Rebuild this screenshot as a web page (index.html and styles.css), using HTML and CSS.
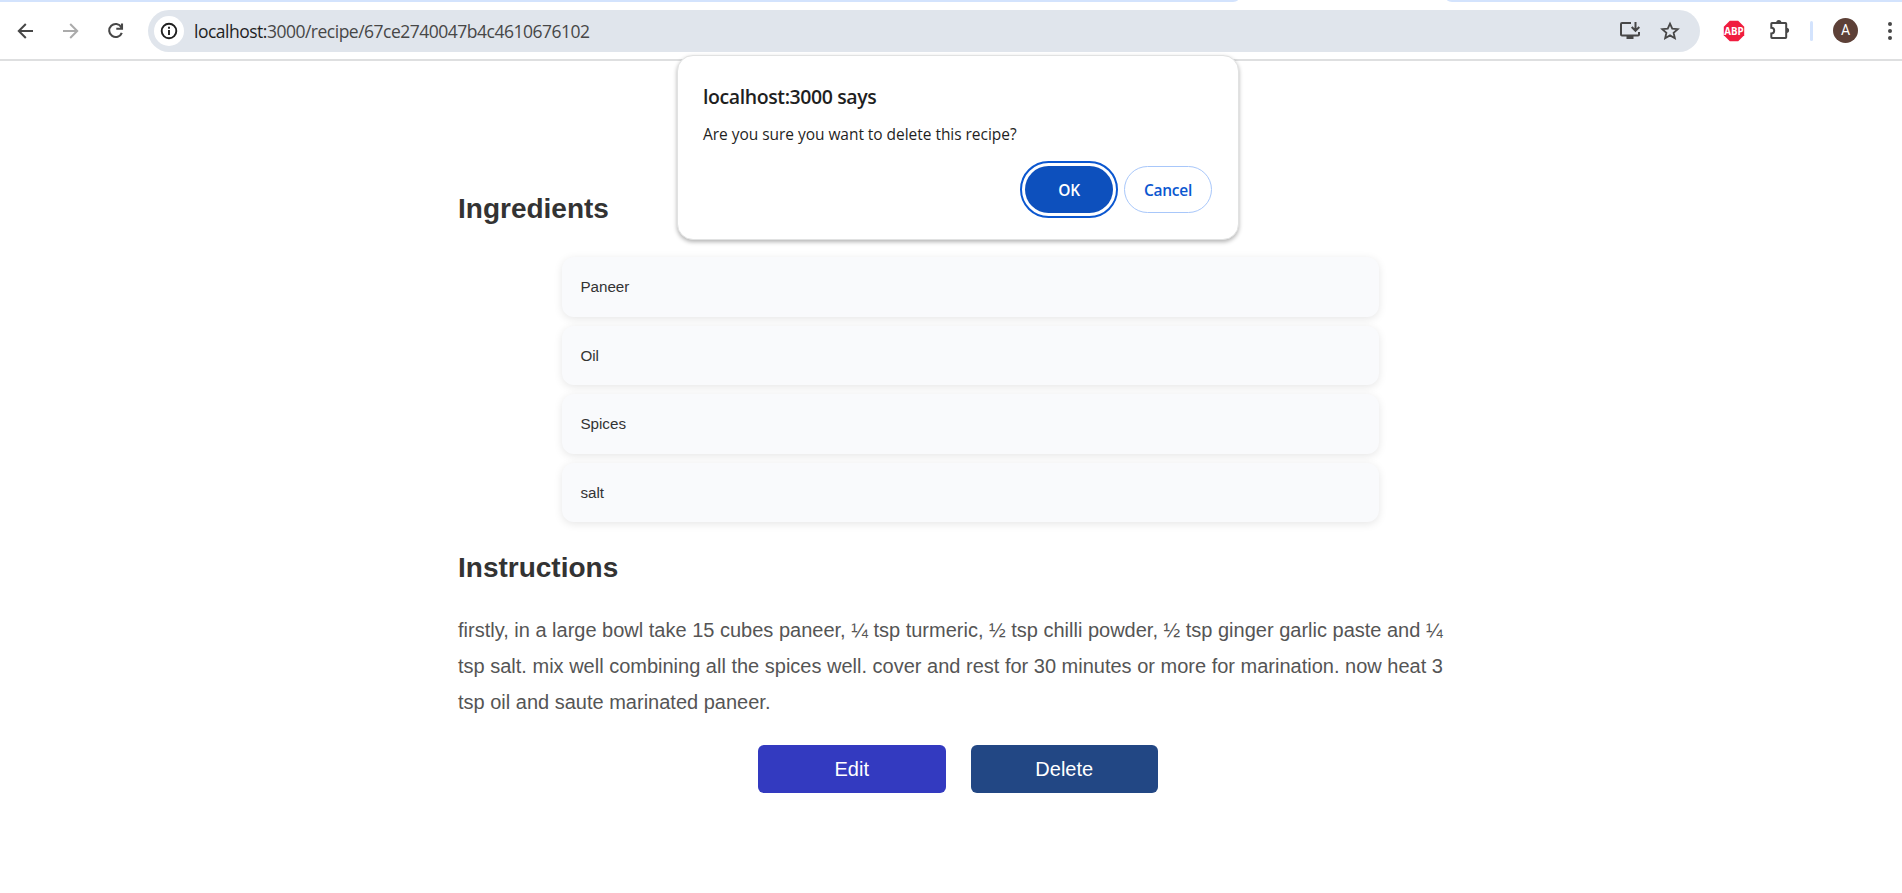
FILE: index.html
```html
<!DOCTYPE html>
<html lang="en">
<head>
<meta charset="utf-8">
<title>Recipe</title>
<link rel="stylesheet" href="styles.css">
</head>
<body>
<div class="tabstrip"><div class="tabstrip-left"></div><div class="tabstrip-right"></div></div>
<header class="toolbar">
  <nav class="nav">
    <svg class="icon" width="24" height="24" viewBox="0 0 24 24" fill="none" stroke="#474747" stroke-width="2"><path d="M20 12H6M12.800 5L5.800 12l7 7"/></svg>
    <svg class="icon" width="24" height="24" viewBox="0 0 24 24" fill="none" stroke="#ababab" stroke-width="2"><path d="M5 12h14M12.200 5l7 7-7 7"/></svg>
    <svg class="icon" width="24" height="24" viewBox="0 0 24 24" fill="none" stroke="#474747" stroke-width="2.100"><path d="M18.300 8.200A6.500 6.500 0 1 0 18.800 13.800M19 4.500v5.200h-5.700"/></svg>
  </nav>
  <div class="omnibox">
    <span class="site-info"><svg width="18" height="18" viewBox="0 0 18 18" fill="none" stroke="#1f1f1f" stroke-width="1.900"><circle cx="9" cy="9" r="7.300"/><path d="M9 8v5M9 4.800v1.900"/></svg></span>
    <span class="url"><span class="host">localhost:</span>3000/recipe/67ce2740047b4c4610676102</span>
    <svg class="install" width="22" height="20" viewBox="0 0 22 20" fill="none" stroke="#474747" stroke-width="2"><path d="M12 2H3Q2 2 2 3v10.500q0 1 1 1h16q1 0 1-1V11M16.500 1v8M12.700 6l3.800 3.800L20.300 6"/><path d="M7.500 15h7v3h-7z" fill="#474747" stroke="none"/></svg>
    <svg class="star" width="20" height="20" viewBox="0 0 20 20" fill="none" stroke="#474747" stroke-width="1.800"><path d="M10 2.600l2.250 5.050 5.500.5-4.150 3.650 1.250 5.400L10 14.350 5.150 17.200l1.250-5.400L2.250 8.150l5.500-.5z"/></svg>
  </div>
  <div class="actions">
    <svg class="abp" width="22" height="22" viewBox="0 0 22 22"><path d="M6.800.8h8.400l6 6v8.400l-6 6H6.800l-6-6V6.800z" fill="#f01c3f"/><text x="1.300" y="15" textLength="19.400" lengthAdjust="spacingAndGlyphs" class="abp-text">ABP</text></svg>
    <svg class="puzzle" width="24" height="24" viewBox="0 0 24 24" fill="none" stroke="#474747" stroke-width="2"><path d="M4 6h13.500q.7 0 .7.700v13.500q0 .7-.7.700H4q-.7 0-.7-.7V16.500a2.900 2.900 0 0 0 0-5.800V6.700Q3.300 6 4 6z"/><path d="M8.200 5.500a2.600 2.600 0 0 1 5.200 0zM18.500 10.700a2.600 2.600 0 0 1 0 5.200z" fill="#474747" stroke="none"/></svg>
    <span class="divider"></span>
    <span class="avatar">A</span>
    <svg class="menu" width="6" height="20" viewBox="0 0 6 20" fill="#474747"><circle cx="3" cy="3" r="2"/><circle cx="3" cy="10" r="2"/><circle cx="3" cy="17" r="2"/></svg>
  </div>
</header>
<main class="recipe">
  <h2 class="heading">Ingredients</h2>
  <ul class="ingredients">
    <li class="ingredient">Paneer</li>
    <li class="ingredient">Oil</li>
    <li class="ingredient">Spices</li>
    <li class="ingredient">salt</li>
  </ul>
  <h2 class="heading">Instructions</h2>
  <p class="instructions">firstly, in a large bowl take 15 cubes paneer, ¼ tsp turmeric, ½ tsp chilli powder, ½ tsp ginger garlic paste and ¼<br>tsp salt. mix well combining all the spices well. cover and rest for 30 minutes or more for marination. now heat 3<br>tsp oil and saute marinated paneer.</p>
  <div class="buttons">
    <button class="button edit">Edit</button>
    <button class="button delete">Delete</button>
  </div>
</main>
<div class="dialog" role="dialog">
  <div class="dialog-title"><span>localhost:3000 says</span></div>
  <div class="dialog-message"><span>Are you sure you want to delete this recipe?</span></div>
  <div class="dialog-actions">
    <button class="dialog-button ok">OK</button>
    <button class="dialog-button cancel">Cancel</button>
  </div>
</div>
</body>
</html>
```
FILE: styles.css
```css
* { box-sizing: border-box; }
body {
  margin: 0;
  height: 893px;
  overflow: hidden;
  background: #fff;
  font-family: "Liberation Sans", Arial, sans-serif;
}
svg { display: block; flex: none; }
.tabstrip { display: flex; justify-content: space-between; height: 2px; }
.tabstrip-left { width: 1238px; background: #d3e3fd; border-bottom-right-radius: 8px 2px; }
.tabstrip-right { width: 455px; background: #d3e3fd; border-bottom-left-radius: 8px 2px; }
.toolbar {
  display: flex;
  align-items: center;
  height: 59px;
  border-bottom: 2px solid #dedfe0;
}
.nav { display: flex; gap: 21px; width: 148px; padding-left: 13px; }
.omnibox {
  display: flex;
  align-items: center;
  width: 1552px;
  height: 42px;
  padding-left: 6px;
  border-radius: 21px;
  background: #e0e5ec;
}
.site-info {
  display: flex;
  align-items: center;
  justify-content: center;
  width: 30px;
  height: 30px;
  border-radius: 50%;
  background: #fff;
}
.url {
  flex: 1;
  padding-left: 10px;
  font: 17.5px/24px "Open Sans", sans-serif;
  letter-spacing: -0.5px;
  color: #474747;
  white-space: nowrap;
}
.host { color: #1f1f1f; }
.install { margin-right: 19px; }
.star { margin-right: 20px; }
.actions { display: flex; align-items: center; padding-left: 23px; }
.abp-text { font: bold 10.5px "Open Sans", sans-serif; fill: #fff; }
.puzzle { margin: -3px 17px 0 23px; }
.divider { width: 3px; height: 20px; margin-left: 1px; border-radius: 1.5px; background: #d3e3fd; }
.avatar {
  width: 25px;
  height: 25px;
  margin: 0 29px 0 20px;
  border-radius: 50%;
  background: #5d4037;
  color: #fff;
  font: 14px/25px Roboto, sans-serif;
  text-align: center;
}
.recipe { width: 1000px; margin-left: 458px; padding-top: 132px; }
.heading { margin: 0; font-size: 28px; line-height: 32px; color: #333; }
.ingredients {
  display: flex;
  flex-direction: column;
  gap: 8.8px;
  width: 817px;
  margin: 32.4px 0 30px 104px;
  padding: 0;
  list-style: none;
}
.ingredient {
  height: 59.6px;
  padding-left: 18.400px;
  border-radius: 12px;
  background: #f9fafc;
  box-shadow: 0 2px 8px rgba(0, 0, 0, .1);
  color: #333;
  font-size: 15.2px;
  line-height: 60.4px;
}
.instructions { margin: 28px 0 0; font-size: 20px; line-height: 36px; color: #555; white-space: nowrap; }
.buttons { display: flex; justify-content: center; gap: 25px; margin-top: 25px; }
.button {
  width: 187.5px;
  height: 48px;
  padding: 0;
  border: 0;
  border-radius: 6px;
  color: #fff;
  font: 20px/48px "Liberation Sans", Arial, sans-serif;
}
.edit { background: #333ac0; }
.delete { background: #224784; }
.dialog {
  position: absolute;
  left: 677px;
  top: 55px;
  width: 562px;
  height: 185px;
  padding: 27px 26px 0 25px;
  border: 1px solid #e1e2e2;
  border-radius: 16px;
  background: #fff;
  box-shadow: 0 2px 4px rgba(0, 0, 0, .3);
  font-family: "Open Sans", sans-serif;
  color: #1f1f1f;
  white-space: nowrap;
}
.dialog-title { font-size: 19.5px; font-weight: 600; line-height: 28px; letter-spacing: -0.4px; }
.dialog-message { margin-top: 11px; font-size: 15.5px; line-height: 24px; letter-spacing: -0.04px; }
.dialog-actions { display: flex; justify-content: flex-end; gap: 11px; margin-top: 20px; }
.dialog-button {
  width: 88px;
  height: 47px;
  padding: 0;
  border-radius: 23.500px;
  font: 600 15.5px/24px "Open Sans", sans-serif;
  letter-spacing: -0.3px;
}
.ok { border: 0; background: #0d50bd; color: #fff; outline: 2px solid #0b57d0; outline-offset: 3px; }
.cancel { border: 1px solid #a8c7fa; background: #fff; color: #0b57d0; }
```
